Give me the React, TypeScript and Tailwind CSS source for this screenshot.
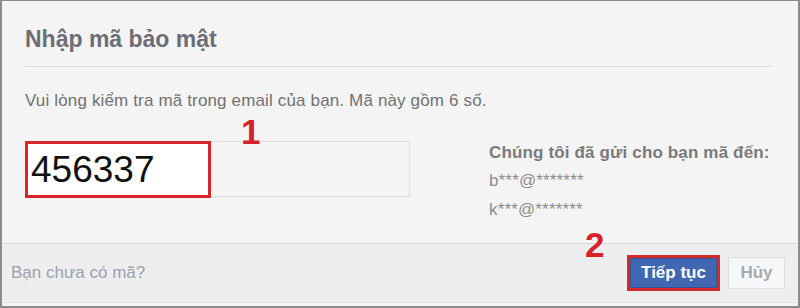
import React from 'react'

export default function App() {
    return (
        <div
            className="relative flex h-[308px] w-[800px] flex-col border-2 border-t border-[#8b8b8b] bg-[#f5f4f5] text-[#6f6f6f]"
            style={{ fontFamily: '"Liberation Sans", Arial, sans-serif' }}
        >
            <div className="mx-[23px] mr-[27px] border-b border-[#dcdcdc] pb-[13px] pt-[24px]">
                <h1 className="text-[23px] font-bold leading-[28px] text-[#6b6e75]">Nhập mã bảo mật</h1>
            </div>

            <p className="mx-[23px] mt-[24px] text-[17px] leading-[20px] tracking-[0.15px] text-[#717171]">
                Vui lòng kiểm tra mã trong email của bạn. Mã này gồm 6 số.
            </p>

            <div className="mx-[23px] mt-[30px] flex items-start">
                <div className="flex h-[56px] w-[385px] border border-[#dcdde0]">
                    <div className="-m-px flex h-[57px] w-[186px] items-center border-[3px] border-[#d7262b] bg-white pl-[3px]">
                        <span className="text-[37px] leading-none text-[#111]">456337</span>
                    </div>
                </div>
                <div className="ml-[79px] text-[17px] tracking-[0.15px]">
                    <div className="font-bold leading-[24px] text-[#7a7a7a]">Chúng tôi đã gửi cho bạn mã đến:</div>
                    <div className="mt-[4px] leading-[24px] text-[#8d8d8d]">b***@*******</div>
                    <div className="mt-[5px] leading-[24px] text-[#8d8d8d]">k***@*******</div>
                </div>
            </div>

            <div className="flex-1" />

            <div className="flex h-[60px] items-center justify-between border-t border-b border-t-[#d9d9d9] border-b-[#e2e2e2] bg-[#efeeef] pl-[9px] pr-[13px]">
                <span className="text-[17px] text-[#9ba1ad]">Bạn chưa có mã?</span>
                <div className="flex items-center gap-[8px]">
                    <span className="border-[3px] border-[#d42a2a]">
                        <button className="block h-[30px] w-[87px] border border-[#34528f] bg-[#4267b2] text-[17px] font-bold text-white">
                            Tiếp tục
                        </button>
                    </span>
                    <button className="h-[32px] w-[57px] border border-[#dddfe2] bg-[#f6f7f9] text-[17px] font-bold text-[#a9abaf]">
                        Hủy
                    </button>
                </div>
            </div>
            <div className="h-[3px]" />

            <span className="absolute left-[239px] top-[113px] text-[35px] font-bold leading-none text-[#d8222a]">1</span>
            <span className="absolute left-[583px] top-[226px] text-[35px] font-bold leading-none text-[#d8222a]">2</span>
        </div>
    )
}
